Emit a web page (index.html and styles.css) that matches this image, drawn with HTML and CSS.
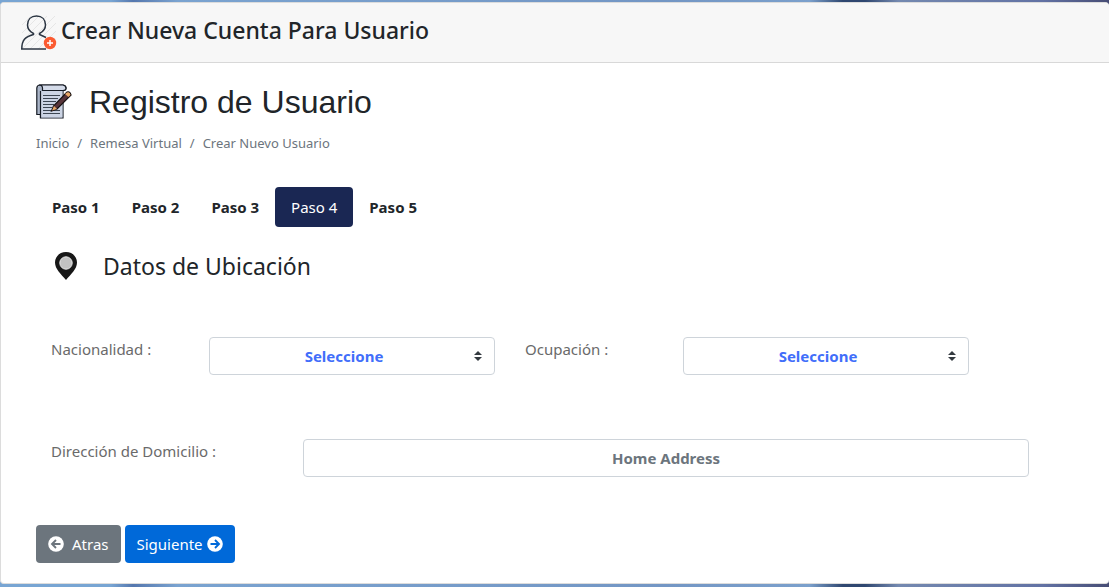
FILE: index.html
```html
<!DOCTYPE html>
<html lang="es">
<head>
<meta charset="utf-8">
<meta name="viewport" content="width=device-width, initial-scale=1">
<title>Crear Nueva Cuenta Para Usuario</title>
<link rel="stylesheet" href="styles.css">
</head>
<body>
<main class="card">
  <header class="card-header">
    <svg class="icon-user" viewBox="0 0 36 36" aria-hidden="true">
      <path d="M1 10 10 1M1 18 18 1M1 26 26 1M1 34 34 1M9 34 35 8M17 34 35 16M25 34 35 24" stroke="#e6e6e6" fill="none"/>
      <path d="M.8 34C.8 25 4 22 12.500 19.500V18.500C8.500 16.500 6.500 13.500 6.500 10C6.500 4.500 10 1 15.500 1S24.500 4.500 24.500 10C24.500 13.500 22.500 16.500 18.500 18.500V19.500L25 22.500" fill="none" stroke="#2c3643" stroke-width="1.500"/>
      <path d="M0 34H25" stroke="#2c3643" stroke-width="1.500"/>
      <circle cx="29" cy="28" r="6.200" fill="#fb5b31"/>
      <path d="M26 28H32M29 25V31" stroke="#fff" stroke-width="1.500"/>
    </svg>
    <h1 class="card-title">Crear Nueva Cuenta Para Usuario</h1>
  </header>
  <div class="card-body">
    <div class="page-heading">
      <svg class="icon-note" viewBox="0 0 36 36" aria-hidden="true">
        <path d="M4 1H27C31 2 31 6 27 6V34H4.500V30.500H.800V4C1 2 2 1 4 1Z" fill="#aab5c8" stroke="#161b24" stroke-width="1.200"/>
        <path d="M5 7H26.500V33.400H5Z" fill="#ccd4e4"/>
        <path d="M3 1H27C31 2 31 6.500 27 6.500H6.500V4C6.500 2 5 1 3 1Z" fill="#d4dbe9" stroke="#161b24" stroke-width="1.200"/>
        <path d="M4.500 7V34" fill="none" stroke="#161b24" stroke-width="1.200"/>
        <path d="M7 11.500H24M7 14.500H22M7 17.500H20M7 20.500H18M7 23.500H16M7 26.500H24M7 29.500H24" stroke="#3d4652"/>
        <path d="M15.500 27 17.500 22 31 8Q34 7 35 11L21 25Z" fill="#58343a" stroke="#161111" stroke-width="1.200"/>
        <path d="M16 26.500 18 22 21 25Z" fill="#e9a968"/>
        <path d="M31 8.500Q34 7.500 34.500 11L32.500 13 29 10Z" fill="#e9a968"/>
      </svg>
      <h2 class="page-title">Registro de Usuario</h2>
    </div>
    <nav aria-label="Ruta">
      <ol class="breadcrumb">
        <li>Inicio</li>
        <li>Remesa Virtual</li>
        <li>Crear Nuevo Usuario</li>
      </ol>
    </nav>
    <nav class="steps" aria-label="Pasos">
      <a class="step" href="#paso1">Paso 1</a>
      <a class="step" href="#paso2">Paso 2</a>
      <a class="step" href="#paso3">Paso 3</a>
      <a class="step step-active" href="#paso4" aria-current="step">Paso 4</a>
      <a class="step" href="#paso5">Paso 5</a>
    </nav>
    <div class="section-heading">
      <svg class="icon-pin" viewBox="0 0 22 28" aria-hidden="true">
        <path d="M11 0C4.500 0 0 4.800 0 10.500C0 17 6 22 11 28C16 22 22 17 22 10.500C22 4.800 17.500 0 11 0Z" fill="#171717"/>
        <circle cx="11" cy="11" r="6.200" fill="#c2c2c2" stroke="#e6e6e6"/>
      </svg>
      <h3 class="section-title">Datos de Ubicación</h3>
    </div>
    <form class="form">
      <div class="row row-pair">
        <label for="nacionalidad">Nacionalidad :</label>
        <select class="control select" id="nacionalidad"><option>Seleccione</option></select>
        <label for="ocupacion">Ocupación :</label>
        <select class="control select" id="ocupacion"><option>Seleccione</option></select>
      </div>
      <div class="row row-address">
        <label for="direccion">Dirección de Domicilio :</label>
        <input class="control" id="direccion" type="text" placeholder="Home Address">
      </div>
      <div class="actions">
        <button class="btn btn-back" type="button">
          <svg class="icon-arrow" viewBox="0 0 16 16" aria-hidden="true"><circle cx="8" cy="8" r="7.800" fill="#fff"/><path d="M12.500 8H4.500M8 4 4 8 8 12" fill="none" stroke="#6c757d" stroke-width="1.900"/></svg>
          Atras
        </button>
        <button class="btn btn-next" type="button">
          Siguiente
          <svg class="icon-arrow" viewBox="0 0 16 16" aria-hidden="true"><circle cx="8" cy="8" r="7.800" fill="#fff"/><path d="M3.500 8H11.500M8 4 12 8 8 12" fill="none" stroke="#0069d9" stroke-width="1.900"/></svg>
        </button>
      </div>
    </form>
  </div>
</main>
</body>
</html>
```

FILE: styles.css
```css
* { box-sizing: border-box; }

body {
  margin: 0;
  padding: 2px 0 3px;
  background: linear-gradient(90deg, #78a5d3 0%, #78a5d3 10%, #5577ae 12%, #7aa3d0 16%, #7396c4 60%, #7ba0cc 73%, #2f4770 76%, #2f4770 78%, #7489b0 81%, #6272a4 94%, #474d75 100%);
  color: #212529;
  font: 15px/24px "Noto Sans", sans-serif;
}

h1, h2, h3 { margin: 0; }

.card {
  background: #fff;
  border: 1px solid #dcdcdc;
  border-right: 0;
  border-radius: 4px;
  overflow: hidden;
}

.card-header {
  display: flex;
  align-items: center;
  gap: 4px;
  height: 60px;
  padding: 0 20px;
  background: #f7f7f7;
  border-bottom: 1px solid #d8d8d8;
}

.icon-user { width: 36px; height: 36px; }

.card-title {
  padding-bottom: 6px;
  font-size: 23px;
  line-height: 28px;
  font-weight: 500;
}

.card-body { padding: 19px 35px 20px; }

.page-heading { display: flex; align-items: center; gap: 17px; }

.icon-note { width: 36px; height: 36px; }

.page-title {
  font: 400 32px/40px "Liberation Sans", Arial, sans-serif;
}

.breadcrumb {
  display: flex;
  margin: 10px 0 33px;
  padding: 0;
  list-style: none;
  color: #6c757d;
  font-size: 13px;
  line-height: 22px;
}

.breadcrumb li + li::before { content: "/"; padding: 0 8px; }

.steps { display: flex; }

.step {
  padding: 8px 16px;
  border-radius: 4px;
  color: #212529;
  font-weight: 700;
  text-decoration: none;
}

.step-active { background: #1a2753; color: #fff; font-weight: 400; }

.section-heading {
  display: flex;
  align-items: center;
  gap: 26px;
  margin-top: 23px;
  padding-left: 19px;
}

.icon-pin { width: 22px; height: 28px; }

.section-title { font-size: 23px; line-height: 32px; font-weight: 400; }

.form { margin: 55px 30px 0 0; }

.row { display: grid; align-items: start; color: #6a6a6a; }

.row-pair { grid-template-columns: 158fr 316fr 158fr 316fr 60fr; }

.row-address { grid-template-columns: 1fr 3fr; margin-top: 64px; }

.row label { padding-left: 15px; }

.control {
  height: 38px;
  margin: 0 15px;
  padding: 6px 12px;
  min-width: 0;
  border: 1px solid #ced4da;
  border-radius: 4px;
  background: #fff;
  color: #495057;
  font: 700 15px/24px "Noto Sans", sans-serif;
  text-align: center;
}

.control::placeholder { color: #6c757d; opacity: 1; }

.select {
  appearance: none;
  padding: 6px 28px 6px 12px;
  color: #416efa;
  text-align-last: center;
  background: #fff url("data:image/svg+xml,%3Csvg xmlns='http://www.w3.org/2000/svg' viewBox='0 0 4 5'%3E%3Cpath fill='%23343a40' d='M2 0L0 2h4zm0 5L0 3h4z'/%3E%3C/svg%3E") no-repeat right 12px center / 8px 10px;
}

.actions { display: flex; gap: 4px; margin-top: 48px; }

.btn {
  display: flex;
  align-items: center;
  height: 38px;
  padding: 0 12px;
  border: 0;
  border-radius: 4px;
  color: #fff;
  font: 400 15px/24px "Noto Sans", sans-serif;
}

.btn-back { gap: 8px; background: #6c757d; }
.btn-next { gap: 4px; background: #0069d9; }

.icon-arrow { width: 16px; height: 16px; }
```
